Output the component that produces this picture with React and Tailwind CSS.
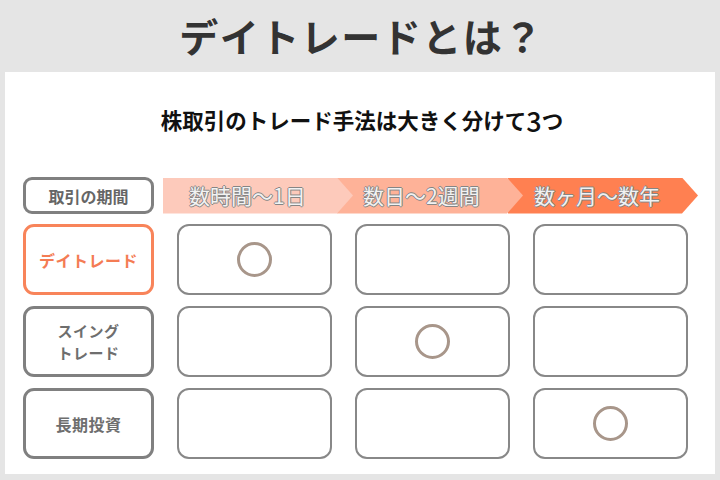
const periods = [
  { text: '数時間〜1日', cls: 'w-[190px] bg-[#fdcabb] z-30' },
  { text: '数日〜2週間', cls: 'w-[186px] -ml-[16px] bg-[#feb298] z-20' },
  { text: '数ヶ月〜数年', cls: 'w-[190px] -ml-[15px] bg-[#ff8051] z-10' },
];

const rows = [
  { label: ['デイトレード'], active: true, mark: 0 },
  { label: ['スイング', 'トレード'], mark: 1 },
  { label: ['長期投資'], mark: 2 },
];

const App = () => {
  return (
    <div className="w-[720px] h-[480px] bg-[#e5e5e5] flex flex-col font-['Noto_Sans_CJK_JP',sans-serif] overflow-hidden">
      {/* TITLE */}
      <div className="h-[72px] flex items-center justify-center pb-[2px]">
        <h1 className="text-[39px] font-bold text-[#333] tracking-[1.5px] leading-none pl-[3px]">デイトレードとは？</h1>
      </div>

      {/* PANEL */}
      <div className="flex-1 mx-[5px] mb-[6px] bg-white pl-[18px] pt-[36px]">
        <p className="h-[24px] flex items-center justify-center text-[21.5px] font-bold text-[#111] leading-none pr-[14px]">
          株取引のトレード手法は大きく分けて<span className="text-[27px] font-medium">3</span>つ
        </p>

        {/* HEADER ROW */}
        <div className="mt-[45px] flex items-center">
          <div className="w-[131px] h-[37px] border-[3px] border-[#808080] rounded-[9px] flex items-center justify-center text-[16px] font-bold text-[#666]">
            取引の期間
          </div>
          <div className="ml-[9px] flex h-[36px]">
            {periods.map((p) => (
              <div
                key={p.text}
                className={`relative ${p.cls} h-full flex items-center pl-[26px] text-[21px] text-[#f2f2f2] [clip-path:polygon(0_0,calc(100%_-_16px)_0,100%_50%,calc(100%_-_16px)_100%,0_100%)] [text-shadow:1px_0_#858585,-1px_0_#858585,0_1px_#858585,0_-1px_#858585]`}
              >
                {p.text}
              </div>
            ))}
          </div>
        </div>

        {/* ROWS */}
        <div className="mt-[10px] flex flex-col gap-[11px]">
          {rows.map((r) => (
            <div key={r.label.join('')} className="flex gap-[23px] h-[71px]">
              <div
                className={`w-[131px] h-full border-[3px] rounded-[11px] flex flex-col items-center justify-center font-bold tracking-[0.5px] ${
                  r.label.length > 1 ? 'text-[15px]' : 'text-[16px]'
                } ${r.active ? 'border-[#f8845a] text-[#f47c54]' : 'border-[#808080] text-[#6e6e6e]'}`}
              >
                {r.label.map((l) => (
                  <span key={l} className="block h-[22px] leading-[22px]">{l}</span>
                ))}
              </div>
              {[0, 1, 2].map((c) => (
                <div
                  key={c}
                  className="w-[155px] h-full border-2 border-[#888] rounded-[12px] flex items-center justify-center"
                >
                  {r.mark === c && (
                    <div className="w-[35px] h-[35px] rounded-full border-[3px] border-[#a8968a]" />
                  )}
                </div>
              ))}
            </div>
          ))}
        </div>
      </div>
    </div>
  );
};

export default App;
